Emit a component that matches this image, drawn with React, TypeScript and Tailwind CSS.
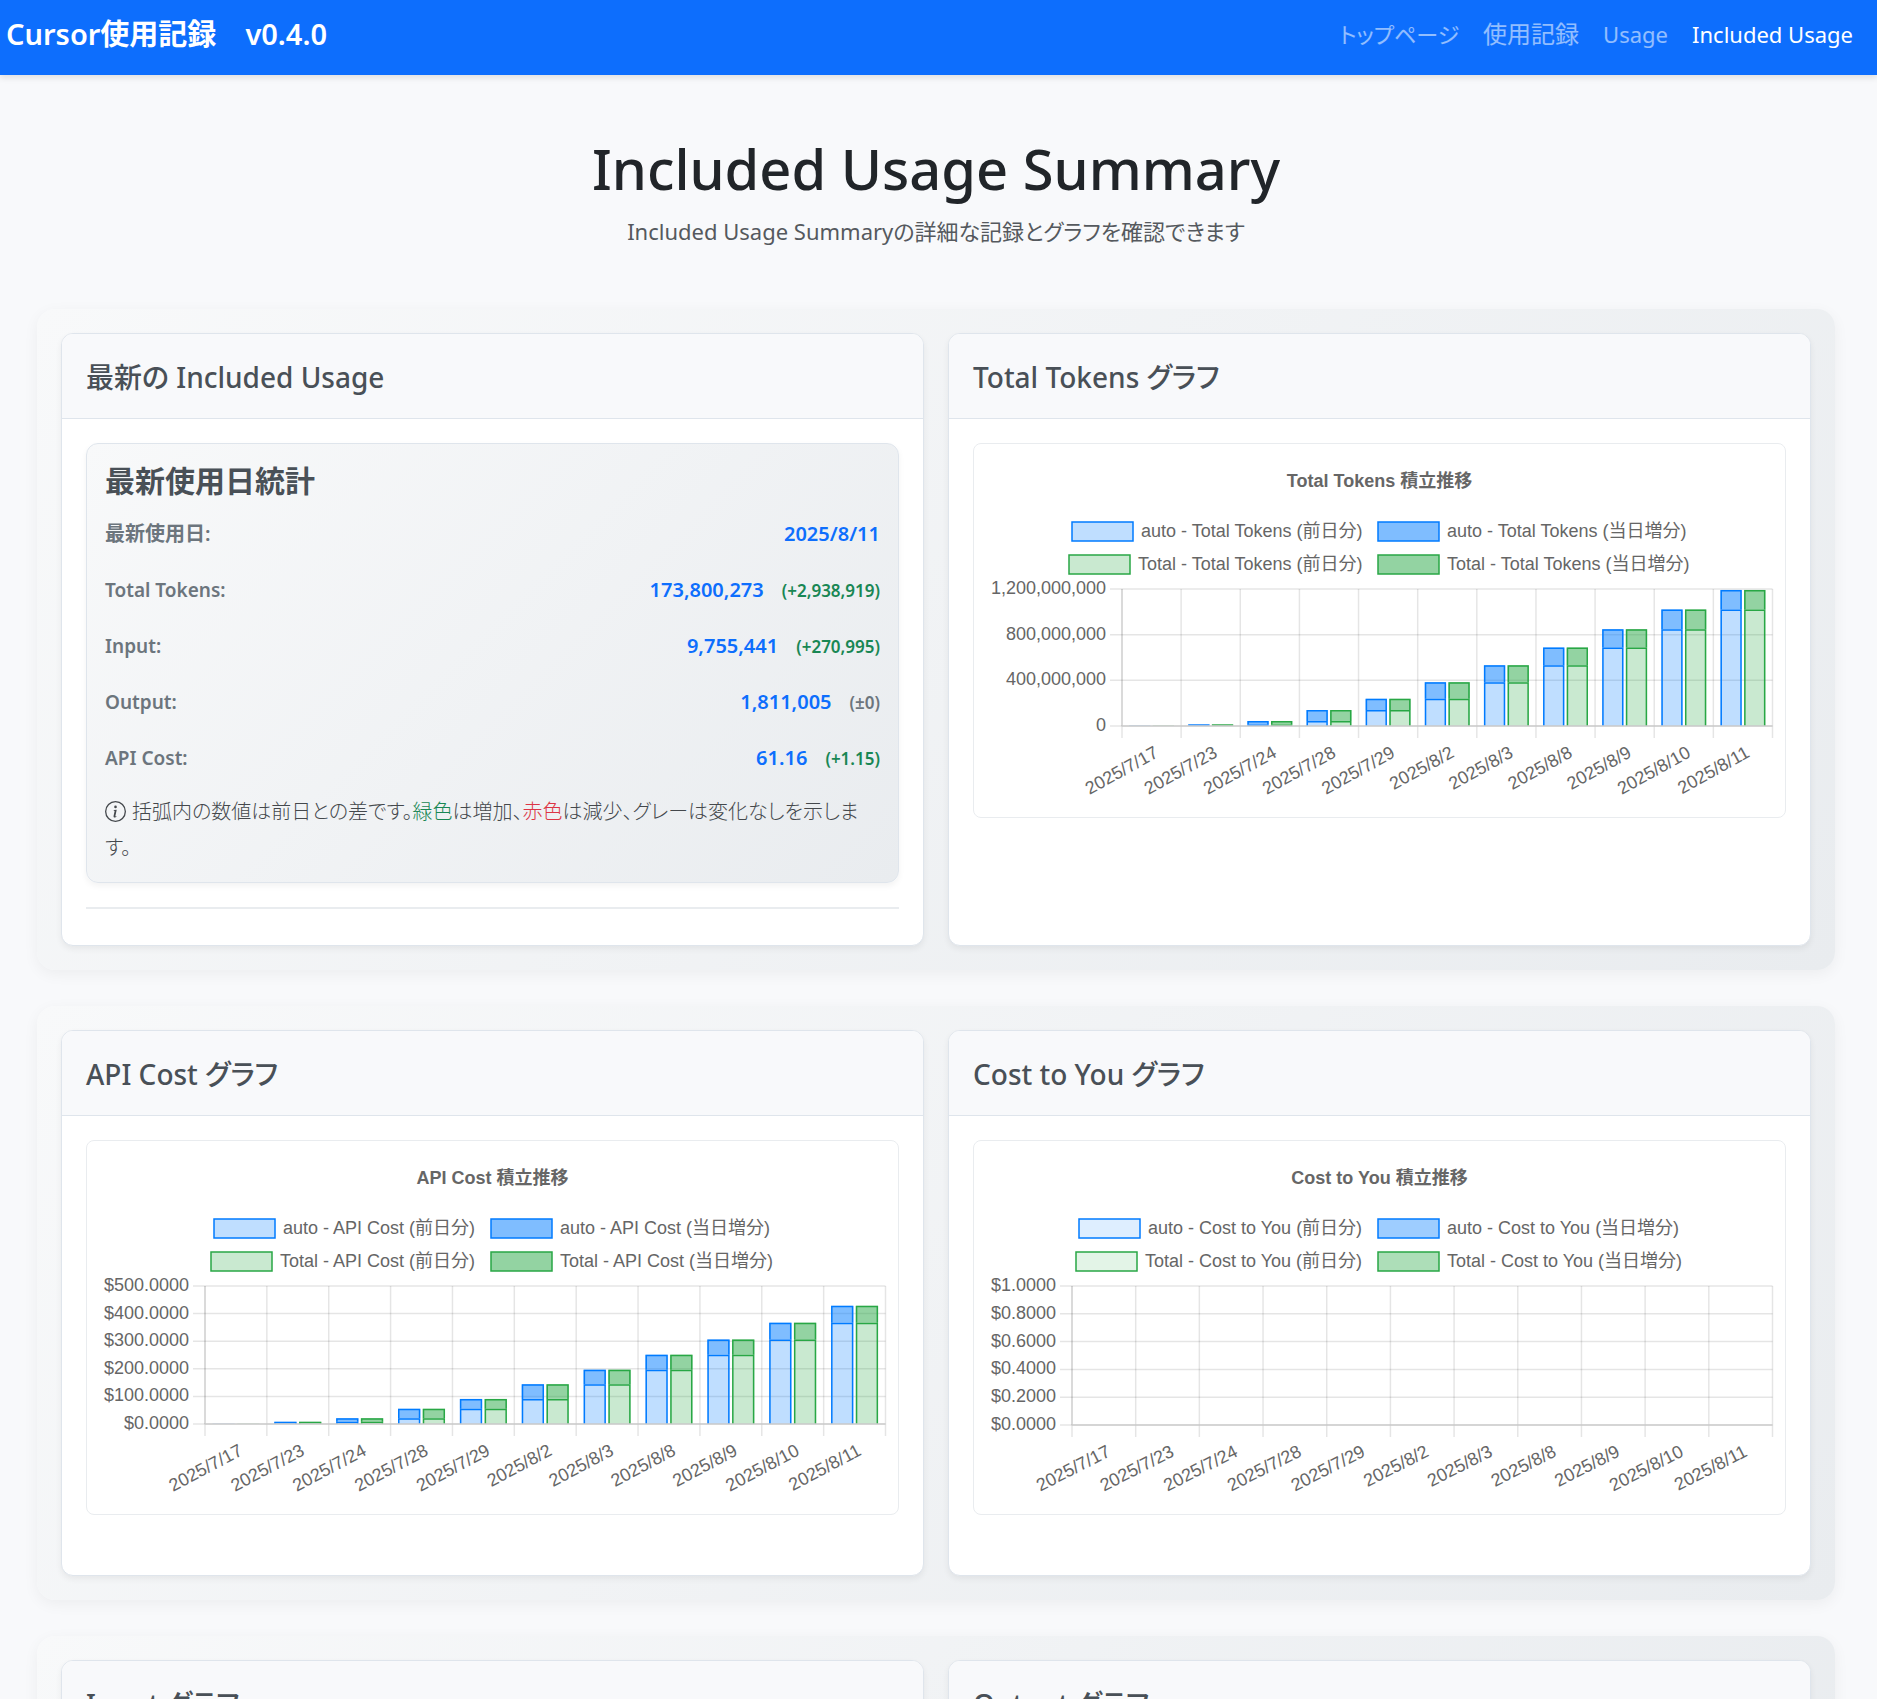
import type { ReactNode } from "react";
import { BsInfoCircle } from "react-icons/bs";

const DATES = [
  "2025/7/17",
  "2025/7/23",
  "2025/7/24",
  "2025/7/28",
  "2025/7/29",
  "2025/8/2",
  "2025/8/3",
  "2025/8/8",
  "2025/8/9",
  "2025/8/10",
  "2025/8/11",
];

const BLUE = "0,123,255";
const GREEN = "40,167,69";

type ChartProps = {
  name: string;
  ticks: string[];
  left: number;
  bottom: number;
  angle: number;
  legendX: [number, number];
  max: number;
  totals: number[];
  alpha: [number, number];
};

const tokensChart: ChartProps = {
  name: "Total Tokens",
  ticks: ["1,200,000,000", "800,000,000", "400,000,000", "0"],
  left: 148,
  bottom: 282,
  angle: 29,
  legendX: [98, 95],
  max: 1200,
  totals: [4, 14, 44, 140, 238, 384, 532, 687, 848, 1021, 1192],
  alpha: [0.25, 0.5],
};

const apiCostChart: ChartProps = {
  name: "API Cost",
  ticks: ["$500.0000", "$400.0000", "$300.0000", "$200.0000", "$100.0000", "$0.0000"],
  left: 118,
  bottom: 283,
  angle: 28,
  legendX: [127, 124],
  max: 500,
  totals: [1, 8, 21, 55, 91, 144, 197, 251, 306, 367, 428],
  alpha: [0.25, 0.5],
};

const costToYouChart: ChartProps = {
  name: "Cost to You",
  ticks: ["$1.0000", "$0.8000", "$0.6000", "$0.4000", "$0.2000", "$0.0000"],
  left: 98,
  bottom: 284,
  angle: 27,
  legendX: [105, 102],
  max: 1,
  totals: [],
  alpha: [0.13, 0.38],
};

function Bar({ x, w, from, to, rgb, alpha }: { x: number; w: number; from: number; to: number; rgb: string; alpha: number }) {
  const height = from - to;
  return (
    <g>
      <rect x={x} y={to} width={w} height={height} fill={`rgba(${rgb},${alpha})`} />
      {height > 1.5 && (
        <path
          d={`M${x + 0.75} ${from}V${to + 0.75}H${x + w - 0.75}V${from}`}
          fill="none"
          stroke={`rgb(${rgb})`}
          strokeWidth={1.5}
        />
      )}
      {height <= 1.5 && height > 0.8 && <rect x={x} y={to} width={w} height={1.2} fill={`rgb(${rgb})`} />}
    </g>
  );
}

function StackedChart({ name, ticks, left, bottom, angle, legendX, max, totals, alpha }: ChartProps) {
  const top = 145;
  const right = 798.5;
  const cat = (right - left) / DATES.length;
  const step = (bottom - top) / (ticks.length - 1);
  const toY = (v: number) => bottom - (v / max) * (bottom - top);
  const barW = cat * 0.36;
  const rows = [
    { who: "auto", rgb: BLUE, x: legendX[0], y: 87 },
    { who: "Total", rgb: GREEN, x: legendX[1], y: 120 },
  ];
  return (
    <div className="rounded-lg border border-[#e9ecef] bg-white">
      <svg
        viewBox="0 0 811 373"
        role="img"
        aria-label={`${name} 積立推移`}
        className="block h-auto w-full font-['Liberation_Sans','Noto_Sans_CJK_JP',sans-serif] text-[18px]"
        fill="#666666"
      >
        <text x={405.5} y={43} textAnchor="middle" className="font-bold">
          {name} 積立推移
        </text>
        {rows.map((r) => (
          <g key={r.who}>
            <rect x={r.x} y={r.y - 9} width={61} height={19} fill={`rgba(${r.rgb},${alpha[0]})`} stroke={`rgb(${r.rgb})`} strokeWidth={1.5} />
            <text x={r.x + 69} y={r.y + 6}>
              {r.who} - {name} (前日分)
            </text>
            <rect x={404} y={r.y - 9} width={61} height={19} fill={`rgba(${r.rgb},${alpha[1]})`} stroke={`rgb(${r.rgb})`} strokeWidth={1.5} />
            <text x={473} y={r.y + 6}>
              {r.who} - {name} (当日増分)
            </text>
          </g>
        ))}
        <g stroke="rgba(0,0,0,0.1)" strokeWidth={1.5}>
          {ticks.map((t, i) => (
            <line key={t} x1={left - 12} x2={right} y1={top + i * step} y2={top + i * step} />
          ))}
          {Array.from({ length: DATES.length + 1 }, (_, i) => (
            <line key={i} x1={left + i * cat} x2={left + i * cat} y1={top} y2={bottom + 12} />
          ))}
          <line x1={left} x2={left} y1={top} y2={bottom} />
        </g>
        {ticks.map((t, i) => (
          <text key={t} x={left - 16} y={top + i * step + 5} textAnchor="end">
            {t}
          </text>
        ))}
        {totals.map((v, i) => {
          const prev = i ? totals[i - 1] : 0;
          const x1 = left + i * cat + cat * 0.12;
          const x2 = x1 + cat * 0.4;
          return (
            <g key={DATES[i]}>
              <Bar x={x1} w={barW} from={bottom} to={toY(prev)} rgb={BLUE} alpha={alpha[0]} />
              <Bar x={x1} w={barW} from={toY(prev)} to={toY(v)} rgb={BLUE} alpha={alpha[1]} />
              <Bar x={x2} w={barW} from={bottom} to={toY(prev)} rgb={GREEN} alpha={alpha[0]} />
              <Bar x={x2} w={barW} from={toY(prev)} to={toY(v)} rgb={GREEN} alpha={alpha[1]} />
            </g>
          );
        })}
        <line x1={left} x2={right} y1={bottom} y2={bottom} stroke="#cecece" strokeWidth={1.5} />
        {DATES.map((d, i) => (
          <text key={d} y={6} textAnchor="end" transform={`translate(${left + (i + 0.5) * cat + 5} ${bottom + 25}) rotate(-${angle})`}>
            {d}
          </text>
        ))}
      </svg>
    </div>
  );
}

function Card({ title, children }: { title: string; children?: ReactNode }) {
  return (
    <article className="flex flex-col overflow-hidden rounded-xl border border-[#dfe5ec] bg-white shadow-[0_3px_6px_rgba(0,0,0,0.06)]">
      <header className="flex h-[85px] shrink-0 items-center border-b border-[#dfe5ec] bg-[#f8f9fb] px-6 pt-[2px]">
        <h2 className="text-[28px] font-medium text-[#495057]">{title}</h2>
      </header>
      <div className="p-6">{children}</div>
    </article>
  );
}

function Row({ children }: { children: ReactNode }) {
  return (
    <section className="grid grid-cols-2 gap-6 rounded-[18px] bg-linear-135 from-[#f8f9fa] to-[#e9ecef] p-6 shadow-[0_4px_15px_rgba(0,0,0,0.05)]">
      {children}
    </section>
  );
}

const STATS: { label: string; value: string; diff?: string; up?: boolean }[] = [
  { label: "最新使用日:", value: "2025/8/11" },
  { label: "Total Tokens:", value: "173,800,273", diff: "(+2,938,919)", up: true },
  { label: "Input:", value: "9,755,441", diff: "(+270,995)", up: true },
  { label: "Output:", value: "1,811,005", diff: "(±0)" },
  { label: "API Cost:", value: "61.16", diff: "(+1.15)", up: true },
];

function LatestStats() {
  return (
    <div className="rounded-xl border border-[#dfe5ec] bg-linear-135 from-[#f8f9fa] to-[#e9ecef] px-[18px] pt-[18px] pb-4 shadow-[0_3px_6px_rgba(0,0,0,0.05)]">
      <h3 className="text-[30px] leading-[38px] font-semibold text-[#495057]">最新使用日統計</h3>
      <dl className="mt-[6px]">
        {STATS.map((s) => (
          <div key={s.label} className="flex h-[56px] items-center justify-between">
            <dt className={s.diff ? "text-[19px] font-semibold text-[#6c757d]" : "text-[20px] font-semibold text-[#6c757d]"}>{s.label}</dt>
            <dd className="flex items-baseline gap-[18px]">
              <span className="text-[20px] font-semibold text-[#0d6efd]">{s.value}</span>
              {s.diff && (
                <span className={s.up ? "text-[17px] font-semibold text-[#198754]" : "text-[17px] font-semibold text-[#6c757d]"}>{s.diff}</span>
              )}
            </dd>
          </div>
        ))}
      </dl>
      <p className="mt-2 text-[20px] leading-[36px] font-light text-[#44484c]">
        <BsInfoCircle className="mr-[6px] inline-block size-[21px] align-[-3px]" aria-hidden="true" />
        括弧内の数値は前日との差です。<span className="text-[#198754]">緑色</span>は増加、
        <span className="text-[#dc3545]">赤色</span>は減少、グレーは変化なしを示します。
      </p>
    </div>
  );
}

const NAV = [
  { label: "トップページ", className: "px-3 text-[22px] text-white/55" },
  { label: "使用記録", className: "px-3 text-[24px] text-white/55" },
  { label: "Usage", className: "px-3 text-[22px] text-white/55" },
  { label: "Included Usage", className: "px-3 text-[22px] text-white" },
];

export default function App() {
  return (
    <div className="h-screen overflow-hidden bg-[#f8f9fb] font-['Noto_Sans','Noto_Sans_CJK_JP',sans-serif] text-[#212529] [font-feature-settings:'palt']">
      <nav className="flex h-[75px] items-center justify-between bg-[#0d6efd] pr-3 pb-2 pl-[6px] shadow-[0_3px_6px_rgba(0,0,0,0.1)]">
        <a href="#" className="text-[29px] font-semibold whitespace-pre text-white">
          Cursor使用記録{"\u3000"}v0.4.0
        </a>
        <ul className="flex items-baseline">
          {NAV.map((item) => (
            <li key={item.label}>
              <a href="#" className={item.className}>
                {item.label}
              </a>
            </li>
          ))}
        </ul>
      </nav>
      <main className="pr-[42px] pl-[37px]">
        <header className="pt-[57px] pb-[60px] text-center">
          <h1 className="text-[56px] leading-[72px] font-medium">Included Usage Summary</h1>
          <p className="mt-[9px] text-[22px] leading-[36px] text-[#55595e]">
            Included Usage Summaryの詳細な記録とグラフを確認できます
          </p>
        </header>
        <div className="flex flex-col gap-9">
          <Row>
            <Card title="最新の Included Usage">
              <LatestStats />
              <hr className="mt-6 mb-3 border-t-2 border-[#e9ecef]" />
            </Card>
            <Card title="Total Tokens グラフ">
              <StackedChart {...tokensChart} />
            </Card>
          </Row>
          <Row>
            <Card title="API Cost グラフ">
              <div className="mb-9">
                <StackedChart {...apiCostChart} />
              </div>
            </Card>
            <Card title="Cost to You グラフ">
              <StackedChart {...costToYouChart} />
            </Card>
          </Row>
          <Row>
            <Card title="Input グラフ" />
            <Card title="Output グラフ" />
          </Row>
        </div>
      </main>
    </div>
  );
}
